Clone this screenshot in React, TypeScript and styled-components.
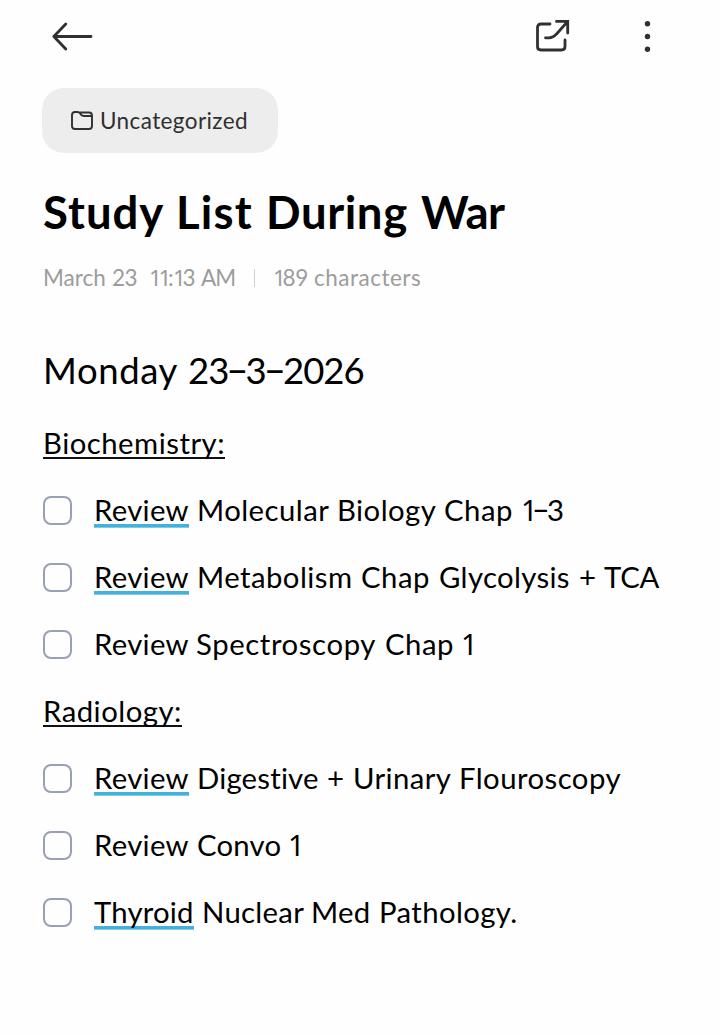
import React from "react";
import styled, { createGlobalStyle } from "styled-components";

const GlobalStyle = createGlobalStyle`
  * { box-sizing: border-box; }
  body {
    margin: 0;
    background: #fefefe;
    color: #000;
    font-family: Lato, "Noto Sans", sans-serif;
    font-kerning: normal;
  }
`;

const Page = styled.main`
  display: flex;
  flex-direction: column;
  align-items: flex-start;
  width: 720px;
  height: 1035px;
  padding: 0 42px 0 43px;
  overflow: hidden;
`;

const Toolbar = styled.header`
  display: flex;
  align-items: center;
  width: 100%;
  height: 72px;
  padding-right: 6px;
`;

const IconButton = styled.button<{ $push?: boolean; $gap?: number }>`
  display: flex;
  padding: 0;
  border: 0;
  background: none;
  color: #303030;
  margin-left: ${(p) => (p.$push ? "auto" : `${p.$gap ?? 0}px`)};
`;

const Category = styled.button`
  display: flex;
  align-items: center;
  width: 236px;
  height: 65px;
  margin: 16px 0 0 -1px;
  padding: 0 0 0 28px;
  border: 0;
  border-radius: 22px;
  background: #ededed;
  color: #303030;
  font-family: inherit;
  gap: 6px;
`;

const Line = styled.span<{ $size: number; $weight?: number }>`
  display: flex;
  font-size: ${(p) => p.$size}px;
  font-weight: ${(p) => p.$weight ?? 400};
  white-space: pre;
`;

const Run = styled.span<{ $track: number; $width?: number }>`
  flex: none;
  width: ${(p) => (p.$width ? `${p.$width}px` : "auto")};
  letter-spacing: ${(p) => p.$track}px;
`;

const One = styled.span`
  letter-spacing: -0.15em;
  font-family: "Noto Sans", sans-serif;
  line-height: 1;
`;

const Dash = styled.span`
  font-family: "Noto Sans", sans-serif;
  line-height: 0;
  vertical-align: 0.08em;
`;

const Title = styled.h1`
  margin: 29px 0 0;
  line-height: 60px;
`;

const Meta = styled.div`
  display: flex;
  align-items: center;
  height: 32px;
  margin-top: 20px;
  color: #9c9c9c;
  line-height: 32px;
`;

const Divider = styled.span`
  width: 1px;
  height: 18px;
  margin-right: 18px;
  background: #d0d0d0;
`;

const DateHeading = styled.h2`
  margin: 46px 0 0;
  line-height: 60px;
`;

const Notes = styled.section`
  display: flex;
  flex-direction: column;
  margin-top: 9px;
`;

const Row = styled.div`
  display: flex;
  align-items: center;
  height: 67px;
  line-height: 34px;
`;

const Check = styled.span`
  flex: none;
  width: 29px;
  height: 29px;
  margin: 2px 22px 0 0;
  border: 2px solid #9a9fb8;
  border-radius: 8px;
`;

const Subject = styled.span<{ $width: number }>`
  width: ${(p) => p.$width}px;
  height: 33px;
  padding-top: 2px;
  line-height: 30px;
  background: linear-gradient(#111, #111) 0 100% / 100% 2px no-repeat;
`;

const Lead = styled.span<{ $width: number; $marked?: boolean }>`
  flex: none;
  width: ${(p) => p.$width}px;
  height: 37px;
  padding-top: 1.5px;
  background: ${(p) =>
    p.$marked
      ? "linear-gradient(#43b1dc 75%, #7ccbe8 75%) 0 100% / 100% 4px no-repeat"
      : "none"};
`;

const Rest = styled.span<{ $gap: number }>`
  margin-left: ${(p) => p.$gap}px;
`;

/* [word, letter spacing, distance to the next word] */
type WordRun = [string, number, number?];

type TaskData = { first: WordRun; marked?: boolean; width: number; gap: number; rest: WordRun[] };

function Words({ runs }: { runs: WordRun[] }) {
  return (
    <>
      {runs.map(([word, track, width], i) => (
        <Run key={i} $track={track} $width={width}>
          {word.split(/([1–])/).map((part, j) =>
            part === "1" ? <One key={j}>1</One> : part === "–" ? <Dash key={j}>–</Dash> : part,
          )}
        </Run>
      ))}
    </>
  );
}

const BODY = 29.3;
const REVIEW: WordRun = ["Review", 0.3];

const biochemistry: TaskData[] = [
  {
    first: REVIEW, marked: true, width: 95, gap: 8,
    rest: [["Molecular", 0.45, 140], ["Biology", 0.45, 107], ["Chap", 0.5, 77], ["1–3", -1]],
  },
  {
    first: REVIEW, marked: true, width: 95, gap: 8,
    rest: [["Metabolism", 0.45, 164], ["Chap", 0.5, 78], ["Glycolysis", 0.35, 140], ["+", 0, 25], ["TCA", -0.2]],
  },
  {
    first: REVIEW, width: 95, gap: 7,
    rest: [["Spectroscopy", 0.6, 189], ["Chap", 0.5, 76], ["1", 0]],
  },
];

const radiology: TaskData[] = [
  {
    first: REVIEW, marked: true, width: 95, gap: 8,
    rest: [["Digestive", 0.2, 130], ["+", 0, 26], ["Urinary", 0.4, 106], ["Flouroscopy", 0.45]],
  },
  { first: REVIEW, width: 95, gap: 8, rest: [["Convo", 0.2, 91], ["1", 0]] },
  {
    first: ["Thyroid", 0.2], marked: true, width: 100, gap: 8,
    rest: [["Nuclear", 0.3, 109], ["Med", 0.3, 68], ["Pathology.", 0.4]],
  },
];

function Task({ task }: { task: TaskData }) {
  return (
    <Row>
      <Check role="checkbox" aria-checked="false" />
      <Lead $width={task.width} $marked={task.marked}>
        <Line $size={BODY}><Words runs={[task.first]} /></Line>
      </Lead>
      <Rest $gap={task.gap}>
        <Line $size={BODY}><Words runs={task.rest} /></Line>
      </Rest>
    </Row>
  );
}

export default function App() {
  return (
    <>
      <GlobalStyle />
      <Page>
        <Toolbar>
          <IconButton aria-label="Back" $gap={8}>
            <svg width="43" height="32" viewBox="0 0 43 32" fill="none" stroke="currentColor" strokeWidth="2.8" strokeLinecap="round" strokeLinejoin="round">
              <path d="M40 16.500H2.800M14.800 4 2.800 16.500 14.800 29" />
            </svg>
          </IconButton>
          <IconButton aria-label="Share" $push>
            <svg width="36" height="36" viewBox="0 0 36 36" fill="none" stroke="currentColor" strokeWidth="2.800" strokeLinecap="round" strokeLinejoin="miter">
              <path d="M15 6H6Q2.500 6 2.500 9.500V28.500Q2.500 32 6 32H26.500Q30 32 30 28.500V22" />
              <path d="M21.500 3.400H32.700V15M32.500 3.600 22 15.500Q18 19.800 14 19.800H10.500" />
            </svg>
          </IconButton>
          <IconButton aria-label="More" $gap={71}>
            <svg width="30" height="36" viewBox="0 0 30 36" fill="currentColor">
              <circle cx="5.500" cy="5.700" r="2.700" />
              <circle cx="5.500" cy="18.500" r="2.700" />
              <circle cx="5.500" cy="31.200" r="2.700" />
            </svg>
          </IconButton>
        </Toolbar>
        <Category>
          <svg width="24" height="22" viewBox="0 0 24 22" fill="none" stroke="currentColor" strokeWidth="1.900" strokeLinejoin="round">
            <path d="M2 5Q2 2 5 2H7.500Q9 2 10 3.200L11 4.600Q12 6 14 6H22M8.500 2.500H19Q22 2.500 22 5.500V16Q22 19 19 19H5Q2 19 2 16V4.500" />
          </svg>
          <Line $size={22.5}><Run $track={0.4}>Uncategorized</Run></Line>
        </Category>
        <Title>
          <Line $size={45.5} $weight={700}>
            <Words runs={[["Study", 1, 133], ["List", 1.2, 90], ["During", 0.6, 155], ["War", -0.6]]} />
          </Line>
        </Title>
        <Meta>
          <Line $size={22.5}>
            <Words runs={[["March", 0, 69], ["23", -0.6, 37], ["11:13", -0.7, 52], ["AM", -1, 53]]} />
          </Line>
          <Divider />
          <Line $size={22.5}>
            <Words runs={[["189", -0.2, 41], ["characters", 0.5]]} />
          </Line>
        </Meta>
        <DateHeading>
          <Line $size={36.5} $weight={400}>
            <Words runs={[["Monday", 0.6, 145], ["23–3–2026", -1]]} />
          </Line>
        </DateHeading>
        <Notes>
          <Row><Subject $width={182}><Line $size={BODY}><Run $track={0.5}>Biochemistry:</Run></Line></Subject></Row>
          {biochemistry.map((t, i) => <Task key={i} task={t} />)}
          <Row><Subject $width={139}><Line $size={BODY}><Run $track={0.5}>Radiology:</Run></Line></Subject></Row>
          {radiology.map((t, i) => <Task key={i} task={t} />)}
        </Notes>
      </Page>
    </>
  );
}
